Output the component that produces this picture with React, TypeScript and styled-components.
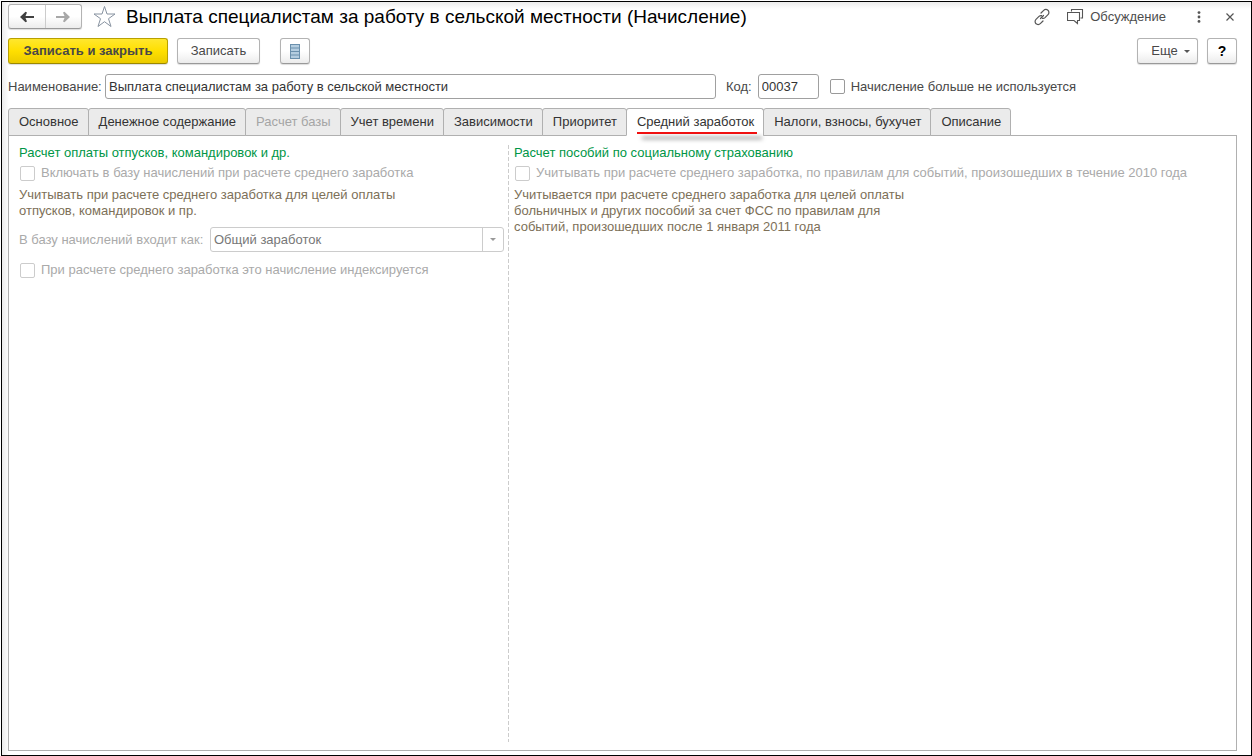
import React from "react";
import styled, { createGlobalStyle, css } from "styled-components";

const GlobalStyle = createGlobalStyle`
  * { box-sizing: border-box; }
  body {
    margin: 0;
    background: #fff;
    color: #484848;
    font: 13px/16px "Liberation Sans", Arial, sans-serif;
  }
  button, input, select { font: inherit; color: inherit; margin: 0; }
`;

const Page = styled.div`
  min-height: 100vh;
  display: flex;
  padding: 1px 0 0 1px;
`;

const FormWindow = styled.main`
  flex: 1;
  min-width: 0;
  display: flex;
  flex-direction: column;
  border: 1px solid #000;
  padding: 2px 14px 4px 6px;
  background:
    linear-gradient(to right, #ececec, #fff) left / 7px 100% no-repeat,
    linear-gradient(to bottom, #ececec, #fff) top / 100% 7px no-repeat,
    #fff;
`;

const TitleBar = styled.header`
  display: flex;
  align-items: center;
  height: 25px;
`;

const raised = css`
  border: 1px solid #b3b3b3;
  border-bottom-color: #999;
  border-radius: 3px;
  background: linear-gradient(#fff 50%, #ececec);
  box-shadow: 0 1px 1px #ddd;
`;

const NavGroup = styled.nav`
  ${raised}
  display: flex;
  width: 74px;
  height: 25px;
`;

const NavButton = styled.button`
  flex: 1;
  display: flex;
  align-items: center;
  justify-content: center;
  padding: 0;
  border: 0;
  background: none;
  & + & { border-left: 1px solid #ccc; }
`;

const IconButton = styled.button`
  display: flex;
  padding: 0;
  border: 0;
  background: none;
`;

const StarButton = styled(IconButton)`
  margin-left: 11px;
`;

const Title = styled.h1`
  flex: 1;
  margin: 0 0 0 10px;
  color: #000;
  font-size: 19px;
  line-height: 24px;
  font-weight: 400;
  white-space: nowrap;
`;

const Tools = styled.div`
  display: flex;
  align-items: center;
  gap: 16px;
  margin-right: 3px;
`;

const Discussion = styled(IconButton)`
  align-items: center;
  gap: 6px;
  margin-right: 15px;
  color: #4d4d4d;
`;

const MenuButton = styled(IconButton)`
  margin-right: 9px;
`;

const CommandBar = styled.div`
  display: flex;
  align-items: center;
  margin-top: 9px;
`;

const Button = styled.button<{ $width: number; $primary?: boolean }>`
  ${raised}
  display: flex;
  align-items: center;
  justify-content: center;
  gap: 6px;
  width: ${(p) => p.$width}px;
  height: 26px;
  padding: 0;
  ${(p) =>
    p.$primary &&
    css`
      border-color: #b8a000;
      border-bottom-color: #9c8800;
      background: linear-gradient(#ffe72e, #ffdf00 50%, #ebcb00);
      font-weight: 700;
    `}
  & + & { margin-left: 9px; }
`;

const ListButton = styled(Button)`
  && { margin-left: 20px; }
`;

const MoreButton = styled(Button)`
  padding-left: 6px;
`;

const HelpButton = styled(Button)`
  color: #000;
  font-size: 14px;
  font-weight: 700;
`;

const Spacer = styled.div`
  flex: 1;
`;

const FieldRow = styled.div`
  display: flex;
  align-items: center;
  margin-top: 10px;
  white-space: nowrap;
`;

const NameLabel = styled.label`
  width: 97px;
`;

const CodeLabel = styled.label`
  margin: 0 6px 0 10px;
`;

const TextInput = styled.input<{ $width: number }>`
  width: ${(p) => p.$width}px;
  height: 25px;
  padding: 0 3px;
  border: 1px solid #a0a0a0;
  border-radius: 3px;
  background: #fff;
  color: #333;
`;

const NameInput = styled(TextInput)`
  flex: 0 1 auto;
`;

const CheckLabel = styled.label<{ $disabled?: boolean }>`
  display: flex;
  align-items: center;
  gap: 6px;
  padding-left: 1px;
  color: ${(p) => (p.$disabled ? "#aaa" : "inherit")};
  white-space: nowrap;
`;

const CheckBox = styled.input.attrs({ type: "checkbox" })`
  appearance: none;
  width: 15px;
  height: 15px;
  border: 1px solid #999;
  border-radius: 2px;
  background: #fff;
  &:disabled { border-color: #ccc; }
  &:checked { background: #999; }
`;

const UnusedCheck = styled(CheckLabel)`
  margin-left: 10px;
`;

const TabList = styled.div`
  display: flex;
  margin-top: 9px;
  position: relative;
`;

const Tab = styled.button<{ $active?: boolean }>`
  position: relative;
  height: 28px;
  padding: 0 9px 0 10px;
  margin-bottom: -1px;
  border: 1px solid #b0b0b0;
  border-bottom-color: ${(p) => (p.$active ? "#fff" : "#b0b0b0")};
  border-radius: 3px 3px 0 0;
  background: ${(p) => (p.$active ? "#fff" : "#ebebeb")};
  color: #333;
  white-space: nowrap;
  & + & { margin-left: -1px; }
  &:disabled { color: #a5a5a5; }
`;

const Underline = styled.span`
  position: absolute;
  left: 10px;
  right: 6px;
  bottom: 1px;
  height: 2px;
  background: #f01010;
  box-shadow: 5px 5px 4px rgba(0, 0, 0, 0.5);
`;

const Panel = styled.section`
  flex: 1;
  display: flex;
  padding: 9px 10px 8px;
  border: 1px solid #b0b0b0;
  background: #fff;
`;

const LeftColumn = styled.div`
  flex: 0 0 485px;
`;

const Divider = styled.div`
  flex: 0 0 1px;
  margin: 0 5px 0 4px;
  background: repeating-linear-gradient(#ccc 0 4px, transparent 4px 6px);
`;

const RightColumn = styled.div`
  flex: 1;
  min-width: 0;
`;

const Heading = styled.h2`
  margin: 0 0 4px;
  color: #009646;
  font-size: 13px;
  line-height: 16px;
  font-weight: 400;
`;

const Hint = styled.p`
  margin: 6px 0 8px;
  max-width: 400px;
  color: #7d7058;
`;

const BaseRow = styled.div`
  display: flex;
  align-items: center;
  margin-bottom: 10px;
  color: #aaa;
  white-space: nowrap;
`;

const BaseLabel = styled.label`
  width: 191px;
`;

const SelectBox = styled.div`
  flex: 1;
  display: flex;
  position: relative;
  height: 25px;
  border: 1px solid #ccc;
  border-radius: 3px;
`;

const Select = styled.select`
  appearance: none;
  flex: 1;
  padding: 0 3px;
  border: 0;
  background: none;
  opacity: 1;
  color: #777;
`;

const SelectArrow = styled.span`
  position: absolute;
  inset: 0 0 0 auto;
  display: flex;
  align-items: center;
  justify-content: center;
  width: 21px;
  border-left: 1px solid #ccc;
  pointer-events: none;
`;

const ArrowIcon = ({ color, flip }: { color: string; flip?: boolean }) => (
  <svg width="16" height="12" viewBox="0 0 16 12" fill={color}>
    {flip ? (
      <path d="M1 5h8.5L8 1.5 9.5.8 15 6l-5.5 5.2L8 10.500 9.500 7H1Z" />
    ) : (
      <path d="M15 5H6.500L8 1.500 6.500.8 1 6l5.500 5.200L8 10.500 6.500 7H15Z" />
    )}
  </svg>
);

const StarIcon = () => (
  <svg width="23" height="23" viewBox="0 0 23 23" fill="#fff" stroke="#8792a0">
    <path d="M11.5 1.5 14 9h8l-6.5 4.7 2.5 7.8-6.5-4.8L5 21.5l2.5-7.8L1 9h8Z" />
  </svg>
);

const LinkIcon = () => (
  <svg width="18" height="18" viewBox="0 0 18 18" fill="none" stroke="#555" strokeWidth="1.2" strokeLinecap="round">
    <path d="m8 5 2.7-2.7a3 3 0 0 1 4.3 0 3 3 0 0 1 0 4.3l-3 3a3 3 0 0 1-2.500.8M10 13l-2.700 2.700a3 3 0 0 1-4.300 0 3 3 0 0 1 0-4.300l3-3a3 3 0 0 1 2.500-.8M7.500 10.500l3-3" />
  </svg>
);

const ChatIcon = () => (
  <svg width="17" height="16" viewBox="0 0 17 16" fill="none" stroke="#555" strokeWidth="1.1">
    <path d="M4.500 2.500V.5h11v8.500h-2" />
    <path d="M.5 3.500h12v8H10.500v3l-3.500-3H.5Z" />
  </svg>
);

const DotsIcon = () => (
  <svg width="4" height="12" viewBox="0 0 4 12" fill="#555">
    <circle cx="2" cy="1.6" r="1.4" />
    <circle cx="2" cy="6" r="1.4" />
    <circle cx="2" cy="10.4" r="1.4" />
  </svg>
);

const CloseIcon = () => (
  <svg width="8" height="8" viewBox="0 0 8 8" stroke="#555" strokeWidth="1.2">
    <path d="m.5.5 7 7M7.5.5l-7 7" />
  </svg>
);

const ListIcon = () => (
  <svg width="10" height="15" viewBox="0 0 10 15">
    <path fill="#b4cde0" d="M0 0h10v15H0z" />
    <path stroke="#6a90ad" d="M0 .5h10M0 4h10M0 7.5h10M0 11h10M0 14.5h10M.5 0v15M9.5 0v15" />
  </svg>
);

const Caret = ({ color }: { color: string }) => (
  <svg width="6" height="3" viewBox="0 0 6 3" fill={color}>
    <path d="M0 0h6L3 3Z" />
  </svg>
);

const tabs = [
  "Основное",
  "Денежное содержание",
  "Расчет базы",
  "Учет времени",
  "Зависимости",
  "Приоритет",
  "Средний заработок",
  "Налоги, взносы, бухучет",
  "Описание",
];
const activeTab = "Средний заработок";
const disabledTab = "Расчет базы";

export default function App() {
  return (
    <Page>
      <GlobalStyle />
      <FormWindow>
        <TitleBar>
          <NavGroup>
            <NavButton aria-label="Назад"><ArrowIcon color="#404040" /></NavButton>
            <NavButton aria-label="Вперед"><ArrowIcon color="#a8a8a8" flip /></NavButton>
          </NavGroup>
          <StarButton aria-label="Избранное"><StarIcon /></StarButton>
          <Title>Выплата специалистам за работу в сельской местности (Начисление)</Title>
          <Tools>
            <IconButton aria-label="Ссылка"><LinkIcon /></IconButton>
            <Discussion><ChatIcon />Обсуждение</Discussion>
            <MenuButton aria-label="Меню"><DotsIcon /></MenuButton>
            <IconButton aria-label="Закрыть"><CloseIcon /></IconButton>
          </Tools>
        </TitleBar>

        <CommandBar>
          <Button $width={160} $primary>Записать и закрыть</Button>
          <Button $width={83}>Записать</Button>
          <ListButton $width={30} aria-label="Список"><ListIcon /></ListButton>
          <Spacer />
          <MoreButton $width={61}>Еще<Caret color="#555" /></MoreButton>
          <HelpButton $width={30}>?</HelpButton>
        </CommandBar>

        <FieldRow>
          <NameLabel htmlFor="name">Наименование:</NameLabel>
          <NameInput id="name" $width={611} defaultValue="Выплата специалистам за работу в сельской местности" />
          <CodeLabel htmlFor="code">Код:</CodeLabel>
          <TextInput id="code" $width={61} defaultValue="00037" />
          <UnusedCheck><CheckBox />Начисление больше не используется</UnusedCheck>
        </FieldRow>

        <TabList role="tablist">
          {tabs.map((name) => (
            <Tab
              key={name}
              role="tab"
              aria-selected={name === activeTab}
              $active={name === activeTab}
              disabled={name === disabledTab}
            >
              {name}
              {name === activeTab && <Underline />}
            </Tab>
          ))}
        </TabList>

        <Panel role="tabpanel">
          <LeftColumn>
            <Heading>Расчет оплаты отпусков, командировок и др.</Heading>
            <CheckLabel $disabled><CheckBox disabled />Включать в базу начислений при расчете среднего заработка</CheckLabel>
            <Hint>Учитывать при расчете среднего заработка для целей оплаты<br />отпусков, командировок и пр.</Hint>
            <BaseRow>
              <BaseLabel htmlFor="base">В базу начислений входит как:</BaseLabel>
              <SelectBox>
                <Select id="base" disabled><option>Общий заработок</option></Select>
                <SelectArrow><Caret color="#999" /></SelectArrow>
              </SelectBox>
            </BaseRow>
            <CheckLabel $disabled><CheckBox disabled />При расчете среднего заработка это начисление индексируется</CheckLabel>
          </LeftColumn>
          <Divider />
          <RightColumn>
            <Heading>Расчет пособий по социальному страхованию</Heading>
            <CheckLabel $disabled><CheckBox disabled />Учитывать при расчете среднего заработка, по правилам для событий, произошедших в течение 2010 года</CheckLabel>
            <Hint>Учитывается при расчете среднего заработка для целей оплаты<br />больничных и других пособий за счет ФСС по правилам для<br />событий, произошедших после 1 января 2011 года</Hint>
          </RightColumn>
        </Panel>
      </FormWindow>
    </Page>
  );
}
